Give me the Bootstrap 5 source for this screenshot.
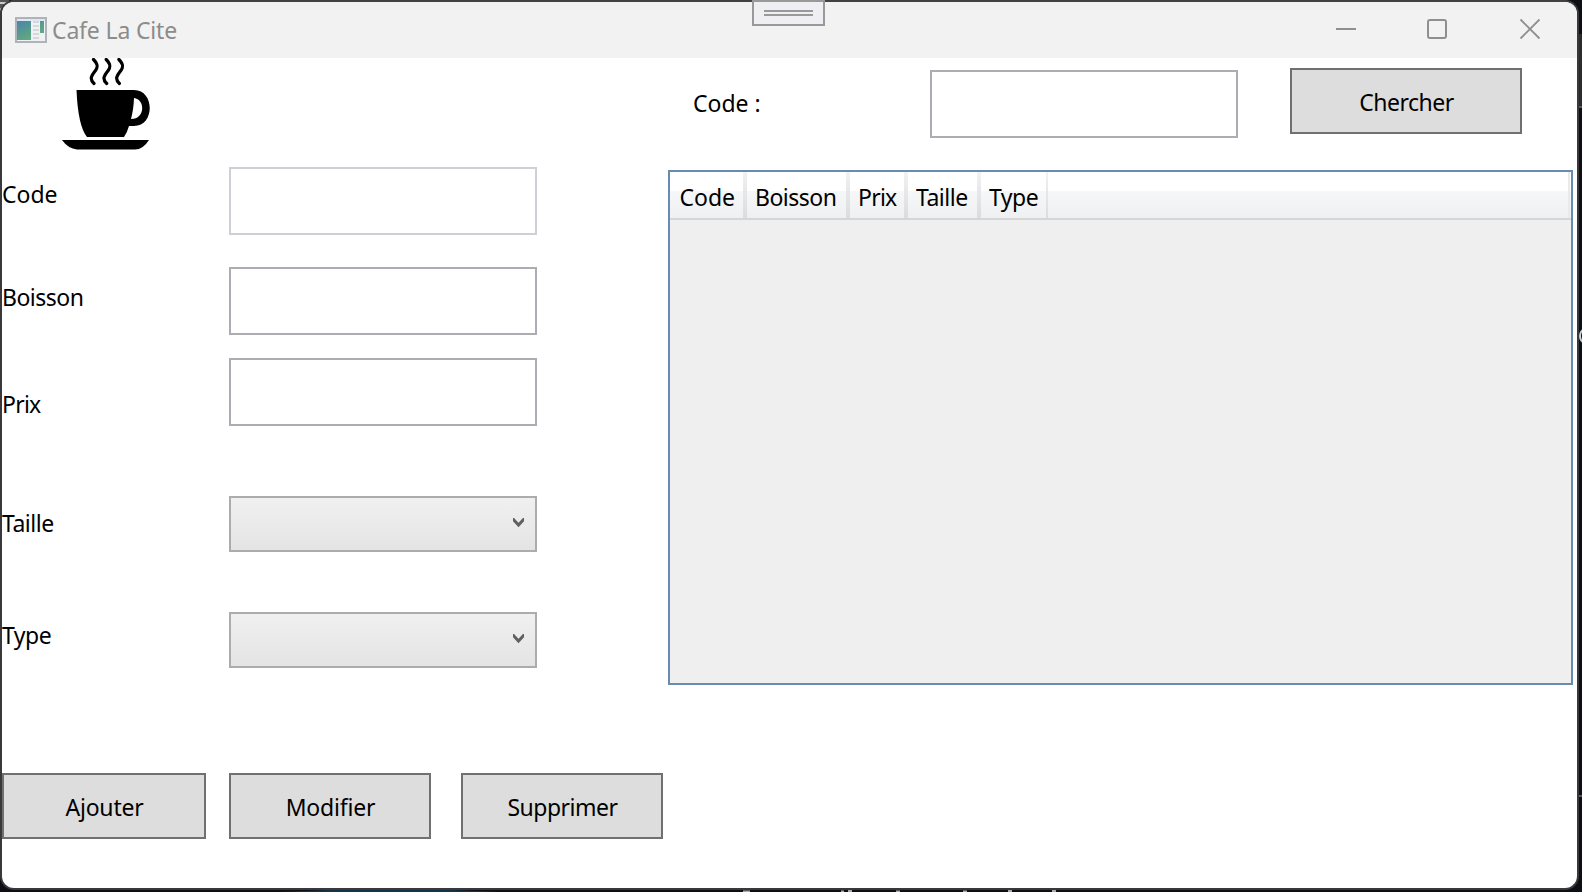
<!DOCTYPE html>
<html lang="fr">
<head>
<meta charset="utf-8">
<title>Cafe La Cite</title>
<link href="https://cdn.jsdelivr.net/npm/bootstrap@5.3.0/dist/css/bootstrap.min.css" rel="stylesheet">
<script src="https://cdn.jsdelivr.net/npm/bootstrap@5.3.0/dist/js/bootstrap.bundle.min.js"></script>
<style>
html,body{height:892px;overflow:hidden}
body{background:#0d0f14;font:400 23px/32px "Noto Sans","Open Sans",sans-serif;color:#000}
.desk{left:0;top:0}
.win{position:relative;width:1579px;height:890px;border:2px solid #39393c;border-top-color:#434142;border-radius:14px;overflow:hidden;background:#fff}
.titlebar{height:56px;background:#f2f2f2;color:#8c8c8c;padding-left:13px}
.caption-text{margin:0 0 1px 5px;letter-spacing:-.16px}
.grip{left:752px;top:0;width:73px;height:26px;z-index:2}
.leftpane{width:666px}
.logo{display:block;margin-left:58px;margin-bottom:15px}
.field label{width:227px;align-self:flex-start}
.wbox.form-control{width:308px;height:68px;border:2px solid #abadb3;border-radius:0;padding:0 8px;background-color:#fff;color:#000;font-size:23px;box-shadow:none}
.wbox.form-control:disabled{border-color:#cfcfd5;opacity:1}
.combo{width:308px;height:56px;border:2px solid #acacac;background:linear-gradient(#f0f0f0,#e4e4e4)}
.combo svg{margin-right:11px;margin-top:-3px}
.wbtn.btn{width:202px;height:66px;border:2px solid #707070;border-radius:0;background:#ddd;color:#000;font-size:23px;line-height:32px;padding:2px 0 0 1px}
.t5{letter-spacing:-.5px}.t7{letter-spacing:-.76px}.t2{letter-spacing:-.2px}
.dgrid{width:905px;height:515px;border:2px solid #688caf;background:#efefef;margin-top:32px}
.dhead{height:48px;border-bottom:2px solid #d5d6d8;background:linear-gradient(#fff 0 41%,#f6f7f9 42%,#eff0f2)}
.dcol{border-right:2px solid;border-image:linear-gradient(#f2f2f2,#d9dbdd) 1;padding:9px 0 0 8px}
.dcol:first-child{padding-left:9.500px}
.dcol+.dcol{border-left:2px solid}
.dtail{border-right:2px solid #eaeaea;margin-right:1px}
</style>
</head>
<body>
<svg class="desk position-absolute" width="1582" height="892" aria-hidden="true">
<path d="M0 0h9v6L0 16z" fill="#555"/><path d="M0 10l14-9M0 3h12" stroke="#ccc" stroke-width="2"/>
<path d="M1579 34h3v72h-3z" fill="#2c2c2f"/><path d="M1578 107h4M1578 796h4" stroke="#58585b" stroke-width="2"/>
<path d="M280 892q110-6 220 0" fill="#153348"/>
<path d="M743 891.500h7M841 891.500h3M848 891h4M896 891.500h4M963 891.500h4M1008 891h4M1052 891h4" stroke="#aaa" stroke-width="2"/>
</svg>
<main class="win">
<header class="titlebar d-flex align-items-center">
<svg width="32" height="26" viewBox="0 0 32 26"><defs><linearGradient id="g" x1="0" y1="0" x2=".7" y2="1"><stop stop-color="#4a84aa"/><stop offset="1" stop-color="#65b176"/></linearGradient></defs>
<rect x="1" y="1" width="30" height="24" fill="#f0f1f4" stroke="#aeb3ba" stroke-width="2"/><path d="M2 3h28" stroke="#dfe8f2" stroke-width="2"/><path d="M2 4h14v19H2zM25 4h4v12h-4z" fill="url(#g)"/><path d="M18 5h6M18 9h6M18 13h6M18 17h6M18 21h6" stroke="#ccced0" stroke-width="1.5"/></svg>
<span class="caption-text me-auto">Cafe La Cite</span>
<svg width="242" height="56" fill="none" stroke="#8f8f8f" stroke-width="2"><path d="M1 27h20"/><rect x="93" y="18" width="18" height="18" rx="2"/><path d="M185.500 17.500l19 19m0-19l-19 19" stroke-width="1.8"/></svg>
</header>
<div class="d-flex">
<section class="leftpane">
<svg class="logo" width="92" height="94" viewBox="60 58 92 94"><g fill="none" stroke="#000" stroke-width="3.2" stroke-linecap="round"><path id="s" d="M93.500 59.500c4 4 5 7 2 11s-7 8-1.500 13"/><use href="#s" x="12.700"/><use href="#s" x="25.400"/></g><path d="M76.500 90H134c21 0 21 36 0 36h-5q-2 7-5 11H87q-9-11-10.500-47z"/><path d="M134 98q-.5 12-3 21c15 0 14-20 3-21z" fill="#fff"/><path d="M62 140h87q-6 9.500-14 9.500H77q-9-1-15-9.500z"/></svg>
<div class="field d-flex"><label style="margin-top:11px">Code</label><input class="form-control wbox" disabled></div>
<div class="field d-flex" style="margin-top:32px"><label class="t5" style="margin-top:14px">Boisson</label><input class="form-control wbox"></div>
<div class="field d-flex" style="margin-top:23px"><label class="t7" style="margin-top:30px">Prix</label><input class="form-control wbox"></div>
<div class="field d-flex" style="margin-top:70px"><label class="t5" style="margin-top:11px">Taille</label><div class="combo d-flex align-items-center justify-content-end" role="combobox"><svg width="11" height="10"><path d="M-.5 .5L5.500 7l6-6.500" fill="none" stroke="#606060" stroke-width="3"/></svg></div></div>
<div class="field d-flex" style="margin-top:60px"><label class="t5" style="margin-top:7px">Type</label><div class="combo d-flex align-items-center justify-content-end" role="combobox"><svg width="11" height="10"><path d="M-.5 .5L5.500 7l6-6.500" fill="none" stroke="#606060" stroke-width="3"/></svg></div></div>
<div class="d-flex" style="margin-top:105px"><button class="btn wbtn t2" style="width:204px">Ajouter</button><button class="btn wbtn t2" style="margin-left:23px">Modifier</button><button class="btn wbtn t5" style="margin-left:30px">Supprimer</button></div>
</section>
<section>
<div class="d-flex align-items-start" style="height:80px"><label style="width:237px;margin:29px 0 0 25px">Code :</label><input class="form-control wbox" style="margin-top:12px"><button class="btn wbtn t5" style="width:232px;margin:10px 0 0 52px">Chercher</button></div>
<div class="dgrid">
<div class="dhead d-flex"><div class="dcol" style="width:75px">Code</div><div class="dcol t5" style="width:103px">Boisson</div><div class="dcol t7" style="width:58px">Prix</div><div class="dcol t5" style="width:73px">Taille</div><div class="dcol t5" style="width:69px">Type</div><div class="dtail flex-grow-1"></div></div>
</div>
</section>
</div>
</main>
<svg class="grip position-absolute" viewBox="0 0 73 26"><rect x="1" y="1" width="71" height="24" fill="#eeeef3" stroke="#999" stroke-width="2"/><path d="M12 11h49M12 15h49" stroke="#999" stroke-width="2"/></svg>
<svg class="position-absolute" style="left:1579px;top:328px" width="3" height="16"><ellipse cx="5" cy="8" rx="4" ry="6" fill="none" stroke="#c8d4dd" stroke-width="2"/></svg>
</body>
</html>
